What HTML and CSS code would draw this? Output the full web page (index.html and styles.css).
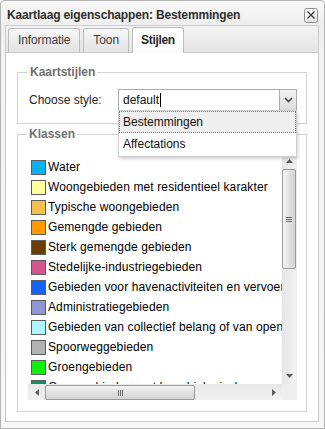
FILE: index.html
```html
<!DOCTYPE html>
<html>
<head>
<meta charset="utf-8">
<link rel="stylesheet" href="styles.css">
</head>
<body>
<div class="window">
  <div class="titlebar">
    <span class="title">Kaartlaag eigenschappen: Bestemmingen</span>
    <span class="close"><svg width="12" height="12" viewBox="0 0 12 12"><path d="M2.5 2.5 L9.5 9.5 M9.5 2.5 L2.5 9.5" stroke="#3a3a3a" stroke-width="1.3" fill="none"/></svg></span>
  </div>
  <div class="tabs">
    <div class="tab">Informatie</div>
    <div class="tab">Toon</div>
    <div class="tab active">Stijlen</div>
  </div>
  <div class="panel">
    <fieldset class="group group-styles">
      <legend>Kaartstijlen</legend>
      <div class="field">
        <label class="field-label">Choose style:</label>
        <div class="combo">
          <div class="combo-input">default<span class="caret"></span></div>
          <div class="combo-trigger"><svg width="9" height="6" viewBox="0 0 9 6"><path d="M1 1 L4.5 4.5 L8 1" stroke="#4a4a4a" stroke-width="1.6" fill="none"/></svg></div>
          <ul class="combo-list">
            <li class="selected">Bestemmingen</li>
            <li>Affectations</li>
          </ul>
        </div>
      </div>
    </fieldset>
    <fieldset class="group group-classes">
      <legend>Klassen</legend>
      <div class="listbox">
        <div class="list-view">
          <div class="row"><span class="swatch sw-water"></span>Water</div>
          <div class="row"><span class="swatch sw-wonen"></span>Woongebieden met residentieel karakter</div>
          <div class="row"><span class="swatch sw-typisch"></span>Typische woongebieden</div>
          <div class="row"><span class="swatch sw-gemengd"></span>Gemengde gebieden</div>
          <div class="row"><span class="swatch sw-sterk"></span>Sterk gemengde gebieden</div>
          <div class="row"><span class="swatch sw-industrie"></span>Stedelijke-industriegebieden</div>
          <div class="row"><span class="swatch sw-haven"></span>Gebieden voor havenactiviteiten en vervoer</div>
          <div class="row"><span class="swatch sw-admin"></span>Administratiegebieden</div>
          <div class="row"><span class="swatch sw-collectief"></span>Gebieden van collectief belang of van openbare diensten</div>
          <div class="row"><span class="swatch sw-spoor"></span>Spoorweggebieden</div>
          <div class="row"><span class="swatch sw-groen"></span>Groengebieden</div>
          <div class="row"><span class="swatch sw-bio"></span>Groengebieden met hoogbiologische waarde</div>
        </div>
        <div class="vscroll">
          <div class="sb-btn"><svg width="7" height="4" viewBox="0 0 7 4"><path d="M0 4 L3.5 0 L7 4 Z" fill="#5a5a5a"/></svg></div>
          <div class="sb-track-v">
            <div class="thumb-v"><svg width="6" height="5" viewBox="0 0 6 5"><path d="M0 0.5 H6 M0 2.5 H6 M0 4.5 H6" stroke="#6a6a6a" stroke-width="1"/></svg></div>
          </div>
          <div class="sb-btn"><svg width="7" height="4" viewBox="0 0 7 4"><path d="M0 0 L3.5 4 L7 0 Z" fill="#5a5a5a"/></svg></div>
        </div>
        <div class="hscroll">
          <div class="sb-btn-h"><svg width="4" height="7" viewBox="0 0 4 7"><path d="M4 0 L0 3.5 L4 7 Z" fill="#5a5a5a"/></svg></div>
          <div class="sb-track-h">
            <div class="thumb-h"><svg width="5" height="6" viewBox="0 0 5 6"><path d="M0.5 0 V6 M2.5 0 V6 M4.5 0 V6" stroke="#6a6a6a" stroke-width="1"/></svg></div>
          </div>
          <div class="sb-btn-h"><svg width="4" height="7" viewBox="0 0 4 7"><path d="M0 0 L4 3.5 L0 7 Z" fill="#5a5a5a"/></svg></div>
        </div>
        <div class="corner"></div>
      </div>
    </fieldset>
  </div>
</div>
</body>
</html>
```

FILE: styles.css
```css
* { box-sizing: border-box; }
html, body { margin: 0; padding: 0; background: #ffffff; }
body { font-family: "Liberation Sans", Arial, sans-serif; font-size: 12px; color: #000; }

.window {
  width: 325px;
  height: 429px;
  border: 1px solid #b4b4b4;
  border-radius: 4px 4px 0 0;
  background: linear-gradient(#f9f9f9, #eeeeee 24px, #f3f3f3 60px, #f7f7f7);
  display: flex;
  flex-direction: column;
  padding-bottom: 6px;
}

.titlebar {
  height: 24px;
  flex: none;
  display: flex;
  align-items: center;
  justify-content: space-between;
  padding: 0 6px 0 6px;
}
.title {
  font-weight: bold;
  font-size: 12px;
  color: #2e2e2e;
  letter-spacing: -0.15px;
  padding-top: 4px;
}
.close {
  width: 14px;
  height: 15px;
  border: 1px solid #8f8f8f;
  border-radius: 3px;
  background: linear-gradient(#ffffff, #e6e6e6);
  display: flex;
  align-items: center;
  justify-content: center;
  margin-top: 4px;
}

.tabs {
  height: 27px;
  flex: none;
  display: flex;
  align-items: flex-end;
  gap: 3px;
  padding-left: 2px;
  margin: 0 5px 0 4px;
  border: 1px solid #cdcdcd;
  border-bottom: none;
  background: linear-gradient(#f4f4f4, #e4e4e4);
  position: relative;
  z-index: 1;
}
.tab {
  height: 24px;
  padding: 0 9px;
  border: 1px solid #bdbdbd;
  border-bottom: none;
  border-radius: 3px 3px 0 0;
  background: linear-gradient(#f7f7f7, #e3e3e3);
  color: #3a3a3a;
  font-size: 12px;
  line-height: 23px;
  letter-spacing: -0.1px;
}
.tab.active {
  height: 26px;
  margin-bottom: -1px;
  padding: 0 8px;
  background: linear-gradient(#ffffff, #fbfbfb);
  font-weight: bold;
  color: #262626;
  line-height: 25px;
  letter-spacing: -0.3px;
}

.panel {
  flex: 1;
  margin: 0 5px 0 4px;
  background: #ffffff;
  border: 1px solid #c8c8c8;
  padding: 12px 11px 9px 11px;
  display: flex;
  flex-direction: column;
}

.group {
  margin: 0;
  border: 1px solid #d3d3d3;
  min-width: 0;
}
.group legend {
  font-weight: bold;
  font-size: 12px;
  line-height: 14px;
  color: #707070;
  padding: 0 2px;
  margin-left: -1px;
}
.group-styles { padding: 10px 9px 12px 11px; }
.group-classes { padding: 11px 9px 11px 10px; margin-top: 3px; }

.field { display: flex; align-items: center; height: 22px; }
.field-label { width: 89px; flex: none; color: #1e1e1e; font-size: 12px; }

.combo { position: relative; display: flex; width: 179px; height: 22px; }
.combo-input {
  flex: 1;
  border: 1px solid #a9adb3;
  border-right: none;
  background: #fff;
  padding-left: 4px;
  line-height: 20px;
  font-size: 12px;
  color: #111;
  display: flex;
  align-items: center;
}
.caret { display: inline-block; width: 1px; height: 14px; background: #000; margin-left: 1px; }
.combo-trigger {
  width: 18px;
  border: 1px solid #a9adb3;
  background: linear-gradient(#f3f3f3, #dcdcdc);
  display: flex;
  align-items: center;
  justify-content: center;
}
.combo-list {
  position: absolute;
  top: 21px;
  left: 0;
  width: 179px;
  margin: 0;
  padding: 0 0 1px 0;
  list-style: none;
  background: #fff;
  border: 1px solid #cfcfcf;
  box-shadow: 1px 2px 3px rgba(0,0,0,0.18);
  z-index: 5;
}
.combo-list li {
  height: 22px;
  line-height: 20px;
  padding-left: 3px;
  border: 1px solid transparent;
  font-size: 12px;
  color: #111;
}
.combo-list li.selected {
  background: #efefef;
  border: 1px dotted #7a7a7a;
}

.listbox {
  width: 269px;
  height: 248px;
  display: grid;
  grid-template-columns: 254px 15px;
  grid-template-rows: 232px 16px;
}
.list-view {
  overflow: hidden;
  padding-top: 5px;
  background: #fff;
}
.row {
  height: 20px;
  display: flex;
  align-items: center;
  white-space: nowrap;
  padding-left: 3px;
  font-size: 12px;
  letter-spacing: 0.12px;
  color: #000;
}
.swatch {
  width: 15px;
  height: 15px;
  flex: none;
  border: 1px solid #5c5c5c;
  margin-right: 2px;
}
.sw-water { background: #0bb0f2; }
.sw-wonen { background: #ffff9c; }
.sw-typisch { background: #f6c04c; }
.sw-gemengd { background: #ff9a00; }
.sw-sterk { background: #6d3d06; }
.sw-industrie { background: #d5568c; }
.sw-haven { background: #1462f8; }
.sw-admin { background: #8f98d4; }
.sw-collectief { background: #aef6ff; }
.sw-spoor { background: #b2b2b2; }
.sw-groen { background: #0ef00e; }
.sw-bio { background: #0a9466; }

.vscroll {
  background: linear-gradient(90deg, #e6e6e6, #f2f2f2);
  display: flex;
  flex-direction: column;
}
.sb-btn { height: 17px; flex: none; display: flex; align-items: center; justify-content: center; }
.sb-track-v { flex: 1; padding: 0 1px 0 0; }
.thumb-v {
  height: 100px;
  border: 1px solid #9b9b9b;
  border-radius: 2px;
  background: linear-gradient(90deg, #f4f4f4, #dedede 60%, #d4d4d4);
  display: flex;
  align-items: center;
  justify-content: center;
}
.hscroll {
  background: linear-gradient(#e8e8e8, #f1f1f1);
  display: flex;
}
.sb-btn-h { width: 17px; flex: none; display: flex; align-items: center; justify-content: center; }
.sb-track-h { flex: 1; padding-top: 1px; }
.thumb-h {
  width: 150px;
  height: 15px;
  border: 1px solid #9b9b9b;
  border-radius: 2px;
  background: linear-gradient(#f4f4f4, #dedede 60%, #d4d4d4);
  display: flex;
  align-items: center;
  justify-content: center;
}
.corner { background: #eeeeee; }
```
